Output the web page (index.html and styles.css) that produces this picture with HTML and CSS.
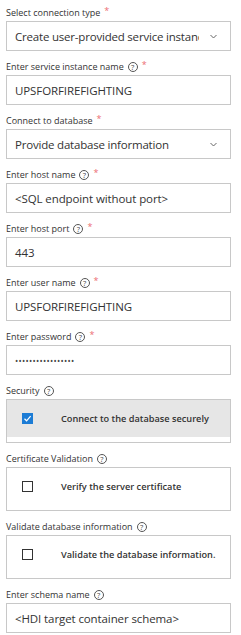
FILE: index.html
```html
<!DOCTYPE html>
<html lang="en">
<head>
  <meta charset="UTF-8">
  <meta name="viewport" content="width=device-width, initial-scale=1.0">
  <title>Database connection</title>
  <link rel="stylesheet" href="styles.css">
</head>
<body>
  <!-- ======= Connection form ======= -->
  <div class="form">

    <div class="field">
      <div class="label">Select connection type<span class="req">*</span></div>
      <div class="control select">
        <span class="value">Create user-provided service instance</span>
        <svg class="chevron" width="7" height="5" viewBox="0 0 7 5"><path d="M0.5 1 L3.5 4 L6.5 1" fill="none" stroke="#666" stroke-width="1"/></svg>
      </div>
    </div>

    <div class="field">
      <div class="label">Enter service instance name<span class="help">?</span><span class="req">*</span></div>
      <div class="control">UPSFORFIREFIGHTING</div>
    </div>

    <div class="field">
      <div class="label">Connect to database<span class="req">*</span></div>
      <div class="control select">
        <span class="value">Provide database information</span>
        <svg class="chevron" width="7" height="5" viewBox="0 0 7 5"><path d="M0.5 1 L3.5 4 L6.5 1" fill="none" stroke="#666" stroke-width="1"/></svg>
      </div>
    </div>

    <div class="field">
      <div class="label">Enter host name<span class="help">?</span><span class="req">*</span></div>
      <div class="control">&lt;SQL endpoint without port&gt;</div>
    </div>

    <div class="field">
      <div class="label">Enter host port<span class="help">?</span><span class="req">*</span></div>
      <div class="control">443</div>
    </div>

    <div class="field">
      <div class="label">Enter user name<span class="help">?</span><span class="req">*</span></div>
      <div class="control">UPSFORFIREFIGHTING</div>
    </div>

    <div class="field">
      <div class="label">Enter password<span class="help">?</span><span class="req">*</span></div>
      <div class="control password">•••••••••••••••••</div>
    </div>

    <!-- チェックボックス群 -->
    <div class="field">
      <div class="label">Security<span class="help">?</span></div>
      <div class="check-group">
        <div class="check-row active">
          <span class="box checked">
            <svg width="9" height="9" viewBox="0 0 9 9"><path d="M1.5 4.8 L3.6 6.8 L7.6 2.2" fill="none" stroke="#fff" stroke-width="1.2"/></svg>
          </span>
          <span class="check-text">Connect to the database securely</span>
        </div>
      </div>
    </div>

    <div class="field">
      <div class="label">Certificate Validation<span class="help">?</span></div>
      <div class="check-group">
        <div class="check-row">
          <span class="box"></span>
          <span class="check-text">Verify the server certificate</span>
        </div>
      </div>
    </div>

    <div class="field">
      <div class="label">Validate database information<span class="help">?</span></div>
      <div class="check-group">
        <div class="check-row">
          <span class="box"></span>
          <span class="check-text">Validate the database information.</span>
        </div>
      </div>
    </div>

    <div class="field">
      <div class="label">Enter schema name<span class="help">?</span></div>
      <div class="control">&lt;HDI target container schema&gt;</div>
    </div>

  </div>
</body>
</html>
```

FILE: styles.css
```css
/* ======= Reset ======= */
* {
  box-sizing: border-box;
  margin: 0;
  padding: 0;
}

body {
  font-family: "Open Sans", "Noto Sans", sans-serif;
  color: #333;
  background: #fff;
  padding: 6px 10px 0 6px;
}

/* ======= Field ======= */
.field {
  margin-bottom: 9px;
}

.label {
  display: flex;
  align-items: center;
  height: 14px;
  margin-bottom: 1px;
  font-size: 9px;
  line-height: 14px;
  color: #333;
  white-space: nowrap;
}

.help {
  display: inline-block;
  width: 10px;
  height: 10px;
  margin-left: 4px;
  border: 1px solid #555;
  border-radius: 50%;
  font-size: 7.5px;
  line-height: 8px;
  text-align: center;
  color: #444;
}

.req {
  align-self: flex-start;
  margin-left: 4px;
  font-size: 9px;
  line-height: 10px;
  color: #ec6b73;
}

/* ======= Inputs ======= */
.control {
  display: flex;
  align-items: center;
  height: 30px;
  padding: 0 8px;
  border: 1px solid #c8c8c8;
  font-size: 11.5px;
  letter-spacing: -0.1px;
  color: #333;
  white-space: nowrap;
  overflow: hidden;
}

.select .value {
  flex: none;
  width: 184px;
  overflow: hidden;
  letter-spacing: -0.2px;
}

.chevron {
  flex: none;
  margin-left: 11px;
}

.password {
  font-size: 8.5px;
  letter-spacing: 0.3px;
  color: #444;
}

/* ======= Checkboxes ======= */
.check-group {
  height: 44px;
  border: 1px solid #c8c8c8;
}

.check-row {
  display: flex;
  align-items: center;
  height: 37px;
  padding-left: 15px;
}

.check-row.active {
  background: #e6e6e6;
}

.box {
  flex: none;
  display: flex;
  align-items: center;
  justify-content: center;
  width: 11px;
  height: 11px;
  border: 1px solid #333;
  background: #fff;
}

.box.checked {
  border-color: #1c7cd5;
  background: #1c7cd5;
}

.check-text {
  margin-left: 28px;
  font-size: 9.2px;
  font-weight: 600;
  color: #333;
}
```
